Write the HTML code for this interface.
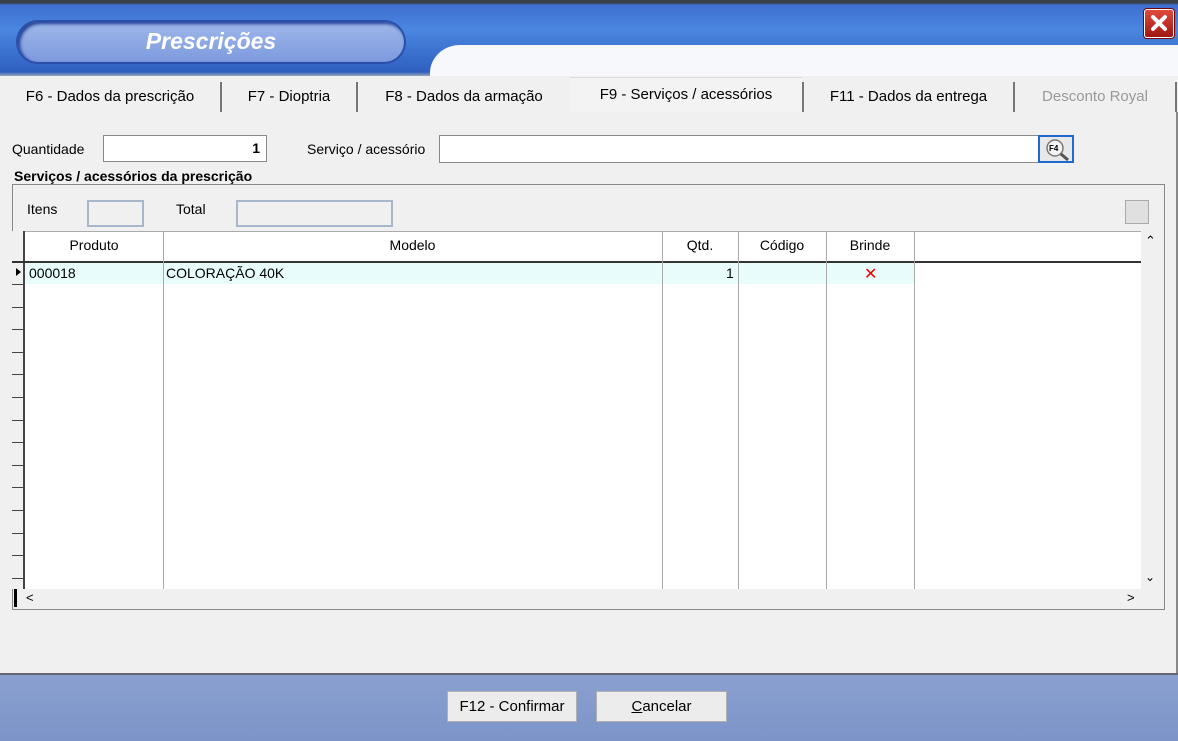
<!DOCTYPE html>
<html><head><meta charset="utf-8"><style>
*{box-sizing:border-box;margin:0;padding:0}
body{width:1178px;height:741px;position:relative;overflow:hidden;font-family:"Liberation Sans",Arial,sans-serif;font-size:14px;color:#000;background:#f0f0f0}
.abs{position:absolute}
.hdr{left:0;top:0;width:1178px;height:76px;background:linear-gradient(180deg,#3a3f4a 0,#3a3f4a 3px,#3f6fd0 5px,#4a86e0 30px,#2f5fc0 72px,#9ab 76px)}
.white{left:430px;top:45px;width:748px;height:31px;background:#f6f8fc;border-top-left-radius:30px 28px}
.pill{left:18px;top:22px;width:386px;height:40px;border-radius:20px;background:linear-gradient(#9fb8ea,#7d9ade);box-shadow:2px 2px 3px #1c3c90 inset,0 0 0 2px #2a4fa8;color:#fff;font-weight:bold;font-style:italic;font-size:23px;text-align:center;line-height:38px}
.close{left:1144px;top:9px;width:30px;height:29px;background:linear-gradient(#e04a3c,#a01612);border:1px solid #fff;border-radius:3px;box-shadow:0 0 0 1px #700}
.tabs{left:0;top:76px;width:1178px;height:36px;background:#f0f0f0}
.tab{position:absolute;top:81px;height:31px;text-align:center;line-height:31px;font-size:15px;background:#f0f0f0}
.sep{position:absolute;top:82px;width:2px;height:30px;background:#777}
.cont{left:0;top:112px;width:1178px;height:561px;background:#f0f0f0;border-right:2px solid #888}
.inp{position:absolute;background:#fff;border:1px solid #8a8a8a}
.grid{left:12px;top:184px;width:1153px;height:426px;border:1px solid #888;background:#f0f0f0}
.gbody{left:12px;top:231px;width:1129px;height:358px;background:#fff;border-top:1px solid #aaa}
.vl{position:absolute;width:1px;background:#aaa}
.hl{position:absolute;height:1px;background:#333}
.btn{position:absolute;top:691px;height:31px;background:#ececec;border:1px solid #b0b0b0;text-align:center;line-height:29px;font-size:15px}
</style></head><body>
<div class="abs hdr"></div>
<div class="abs white"></div>
<div class="abs pill">Prescrições</div>
<div class="abs close"><svg width="28" height="27" viewBox="0 0 28 27"><path d="M8 7L20 19M20 7L8 19" stroke="#fff" stroke-width="4" stroke-linecap="round"/></svg></div>
<div class="abs tabs"></div>
<div class="tab" style="left:0;width:220px">F6 - Dados da prescrição</div>
<div class="sep" style="left:220px"></div>
<div class="tab" style="left:222px;width:134px">F7 - Dioptria</div>
<div class="sep" style="left:356px"></div>
<div class="tab" style="left:358px;width:212px">F8 - Dados da armação</div>
<div class="tab" style="left:570px;top:77px;height:35px;line-height:33px;width:232px;border-top:1px solid #ddd;background:#f3f3f3;z-index:2">F9 - Serviços / acessórios</div>
<div class="sep" style="left:802px"></div>
<div class="tab" style="left:804px;width:209px">F11 - Dados da entrega</div>
<div class="sep" style="left:1013px"></div>
<div class="tab" style="left:1015px;width:160px;color:#999">Desconto Royal</div>
<div class="sep" style="left:1175px"></div>
<div class="abs cont"></div>
<div class="abs" style="left:12px;top:141px">Quantidade</div>
<div class="inp" style="left:103px;top:135px;width:164px;height:27px;text-align:right;padding-right:6px;line-height:25px;font-weight:bold">1</div>
<div class="abs" style="left:307px;top:141px">Serviço / acessório</div>
<div class="inp" style="left:439px;top:135px;width:600px;height:28px"></div>
<div class="abs" style="left:1038px;top:135px;width:36px;height:28px;border:2px solid #1a6ad0;background:#e8e8e8"><svg width="32" height="24"><circle cx="15" cy="11" r="8" fill="#f4f4f4" stroke="#777" stroke-width="1.5"/><path d="M21 17l7 6" stroke="#555" stroke-width="3"/><text x="9" y="14" font-size="8" font-weight="bold" font-family="Liberation Sans">F4</text></svg></div>
<div class="abs" style="left:14px;top:168px;font-weight:bold">Serviços / acessórios da prescrição</div>
<div class="abs grid"></div>
<div class="abs" style="left:27px;top:201px">Itens</div>
<div class="abs" style="left:87px;top:200px;width:57px;height:27px;border:2px solid #a8b8cc;background:#f0f0f0"></div>
<div class="abs" style="left:176px;top:201px">Total</div>
<div class="abs" style="left:236px;top:200px;width:157px;height:27px;border:2px solid #a8b8cc;background:#f0f0f0"></div>
<div class="abs" style="left:1125px;top:200px;width:24px;height:24px;border:1px solid #aaa;background:#e0e0e0"></div>
<div class="abs gbody"></div>
<div class="abs" style="left:25px;top:262px;width:889px;height:22px;background:#e8fcfc"></div>
<div class="abs" style="left:12px;top:231px;width:13px;height:358px;background:#f0f0f0;border-right:2px solid #444"></div>
<div class="hl" style="left:12px;top:261px;width:1129px;height:2px"></div>
<div id="rows"></div>
<div class="vl" style="left:163px;top:231px;height:358px"></div>
<div class="vl" style="left:662px;top:231px;height:358px"></div>
<div class="vl" style="left:738px;top:231px;height:358px"></div>
<div class="vl" style="left:826px;top:231px;height:358px"></div>
<div class="vl" style="left:914px;top:231px;height:358px"></div>
<div class="abs" style="left:25px;top:237px;width:138px;text-align:center">Produto</div>
<div class="abs" style="left:163px;top:237px;width:499px;text-align:center">Modelo</div>
<div class="abs" style="left:662px;top:237px;width:76px;text-align:center">Qtd.</div>
<div class="abs" style="left:738px;top:237px;width:88px;text-align:center">Código</div>
<div class="abs" style="left:826px;top:237px;width:88px;text-align:center">Brinde</div>
<div class="abs" style="left:16px;top:268px;width:0;height:0;border-left:5px solid #000;border-top:4px solid transparent;border-bottom:4px solid transparent"></div>
<div class="abs" style="left:29px;top:265px">000018</div>
<div class="abs" style="left:166px;top:265px">COLORAÇÃO 40K</div>
<div class="abs" style="left:726px;top:265px">1</div>
<div class="abs" style="left:864px;top:264px;color:#e00;font-size:16px">✕</div>
<div class="abs" style="left:1141px;top:231px;width:22px;height:358px;background:#f0f0f0"></div>
<div class="abs" style="left:1145px;top:233px;font-size:13px">⌃</div>
<div class="abs" style="left:1145px;top:570px;font-size:12px">⌄</div>
<div class="abs" style="left:13px;top:589px;width:1128px;height:20px;background:#f0f0f0"></div>
<div class="abs" style="left:14px;top:589px;width:3px;height:18px;background:#000"></div>
<div class="abs" style="left:26px;top:590px;font-size:13px">&lt;</div>
<div class="abs" style="left:1127px;top:590px;font-size:13px">&gt;</div>
<div class="abs" style="left:0;top:673px;width:1178px;height:68px;background:linear-gradient(#8aa0d0,#7c94c8);border-top:2px solid #667"></div>
<div class="btn" style="left:447px;width:130px">F12 - Confirmar</div>
<div class="btn" style="left:596px;width:131px"><u>C</u>ancelar</div>
<script>
var r=document.getElementById('rows'),h='';
for(var y=284;y<589;y+=22.6){h+='<div class="hl" style="left:12px;top:'+Math.round(y)+'px;width:13px;background:#444"></div>';}
r.innerHTML=h;
</script>
</body></html>
